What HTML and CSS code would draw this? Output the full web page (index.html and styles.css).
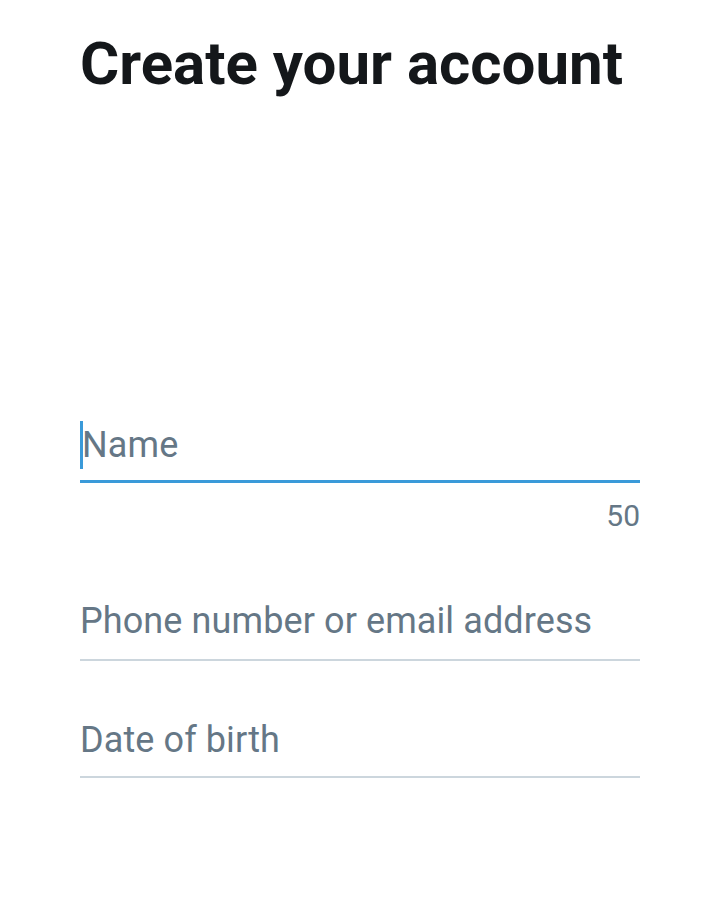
FILE: index.html
```html
<!doctype html>
<html lang="en">
	<head>
		<meta charset="UTF-8" />
		<meta name="viewport" content="width=device-width, initial-scale=1.0" />
		<title>Create your account</title>
		<link rel="stylesheet" href="styles.css">
	</head>
	<body>
		<h1>Create your account</h1>

		<div class="form">
			<div class="field field-active">
				<span class="caret"></span>
				<span class="placeholder">Name</span>
			</div>
			<div class="counter">50</div>

			<div class="field field-phone">
				<span class="placeholder">Phone number or email address</span>
			</div>

			<div class="field field-date">
				<span class="placeholder">Date of birth</span>
			</div>
		</div>
	</body>
</html>
```

FILE: styles.css
```css
body { margin: 0; padding: 0 80px; background: #fff; font-family: Roboto, "Liberation Sans", sans-serif; }
h1 { margin: 28px 0 0; font-size: 60px; line-height: 72px; font-weight: 700; color: #14171a; }
.form { margin-top: 321px; }
.field { display: flex; align-items: center; height: 48px; border-bottom: 2px solid #ccd6dd; font-size: 36px; line-height: 48px; color: #657786; letter-spacing: 0.1px; }
.field-active { border-bottom: 3px solid #3a9ad9; padding-bottom: 11px; }
.caret { width: 3px; height: 48px; background: #3a9ad9; margin-right: -1px; }
.counter { margin-top: 16px; text-align: right; font-size: 30px; line-height: 34px; color: #657786; }
.field-phone { margin-top: 64px; padding-bottom: 14px; }
.field-date { margin-top: 55px; padding-bottom: 12px; }
```
